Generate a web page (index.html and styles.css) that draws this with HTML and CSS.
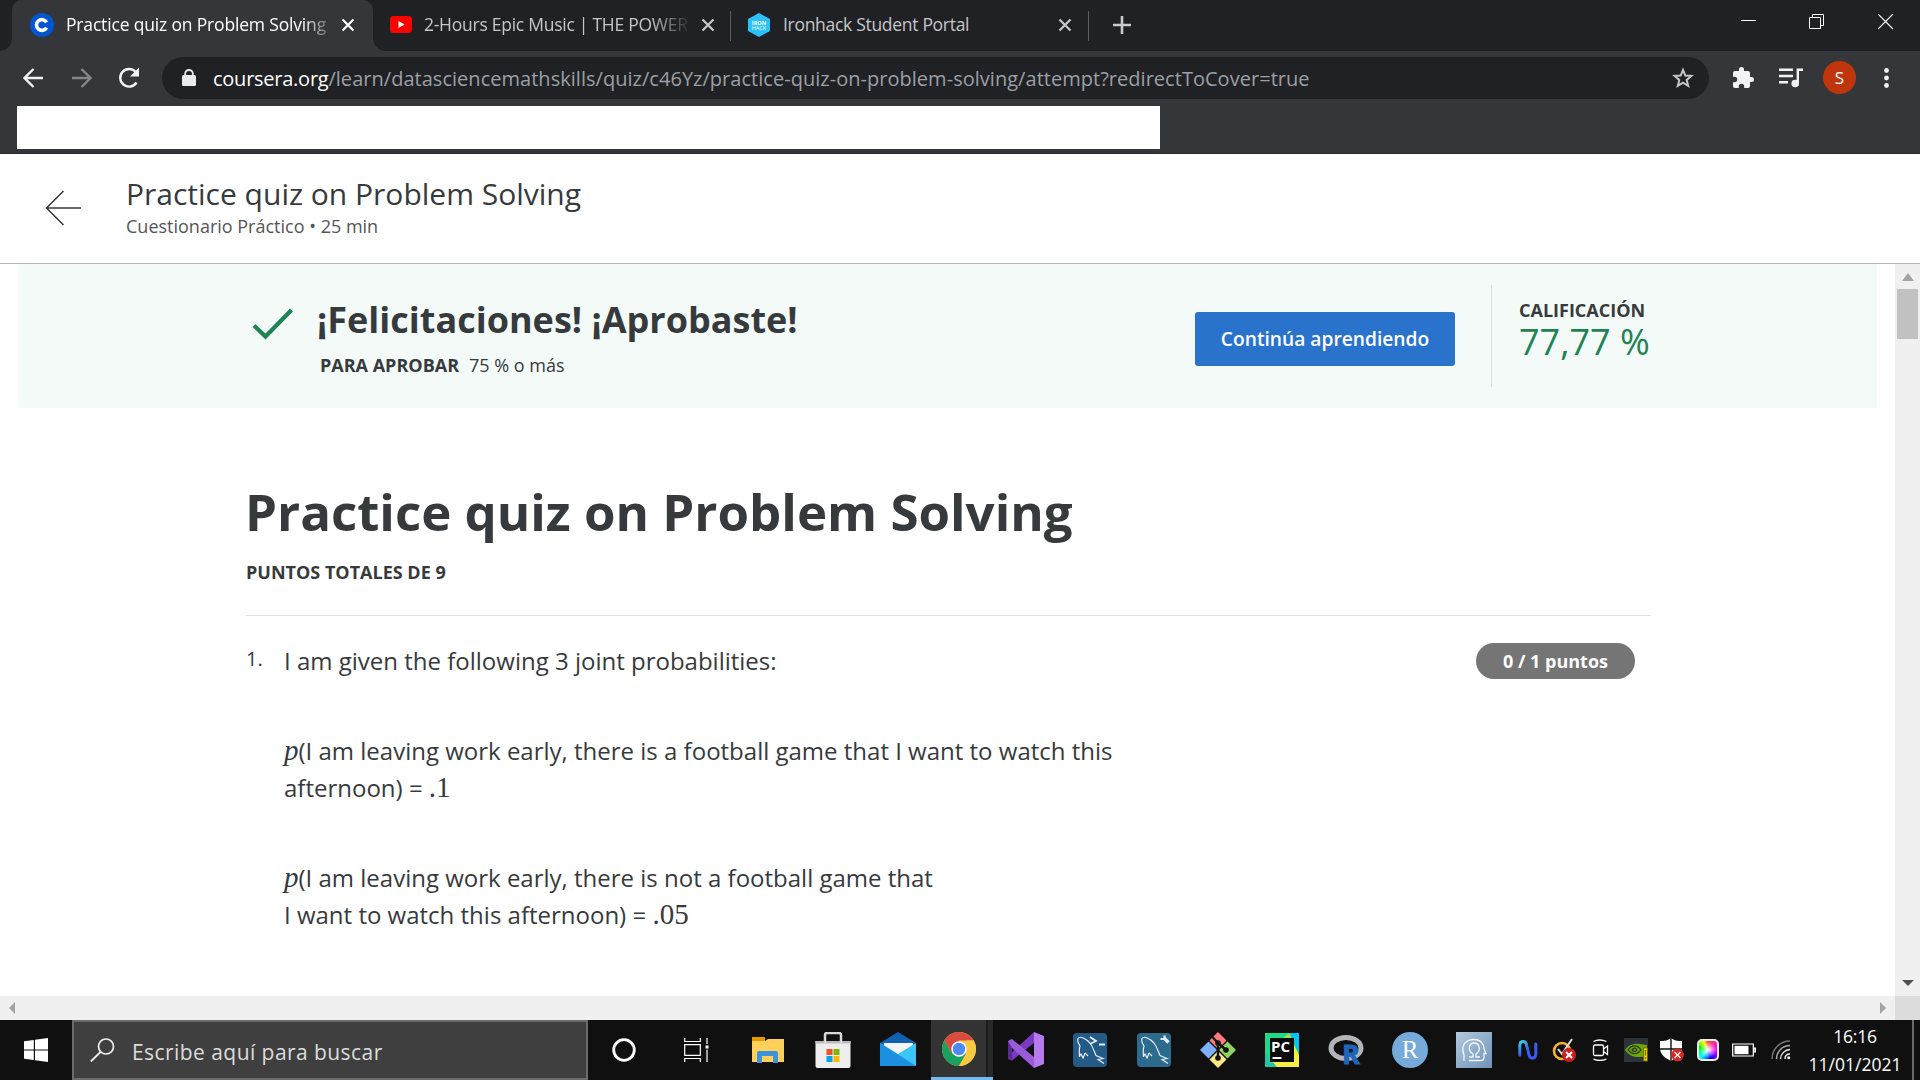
FILE: index.html
```html
<!DOCTYPE html>
<html lang="es">
<head>
<meta charset="utf-8">
<title>Practice quiz on Problem Solving</title>
<link rel="stylesheet" href="styles.css">
</head>
<body>
<div class="screen">
  <div class="tabstrip">
    <div class="tab active">
      <svg class="favicon" width="24" height="24" viewBox="0 0 24 24"><circle cx="12" cy="12" r="12" fill="#0056d2"/><path d="M16.6 14.6a5.4 5.4 0 1 1 0-5.2" fill="none" stroke="#fff" stroke-width="3.6"/></svg>
      <span class="tab-title fade-active">Practice quiz on Problem Solving</span>
      <svg class="tab-close" width="14" height="14" viewBox="0 0 14 14"><path d="M1.5 1.5l11 11m0-11l-11 11" stroke="#fff" stroke-width="2.2"/></svg>
    </div>
    <div class="tab second">
      <svg class="favicon" width="22" height="17" viewBox="0 0 22 17"><rect width="22" height="17" rx="3.5" fill="#f00"/><path d="M8.5 5v7l6-3.5z" fill="#fff"/></svg>
      <span class="tab-title fade">2-Hours Epic Music | THE POWER</span>
      <svg class="tab-close" width="14" height="14" viewBox="0 0 14 14"><path d="M1.5 1.5l11 11m0-11l-11 11" stroke="#c8cacd" stroke-width="2.2"/></svg>
    </div>
    <div class="tab third">
      <svg class="favicon" width="24" height="24" viewBox="0 0 24 24"><path d="M12 0l11 6v12l-11 6-11-6V6z" fill="#2dc1fc"/><text x="12" y="11.5" font-size="5.5" font-weight="700" text-anchor="middle" fill="#fff">IRON</text><text x="12" y="17" font-size="5.5" text-anchor="middle" fill="#fff">HACK</text></svg>
      <span class="tab-title">Ironhack Student Portal</span>
      <svg class="tab-close" width="14" height="14" viewBox="0 0 14 14"><path d="M1.5 1.5l11 11m0-11l-11 11" stroke="#c8cacd" stroke-width="2.2"/></svg>
    </div>
    <svg class="newtab" width="18" height="18" viewBox="0 0 18 18"><path d="M9 0v18M0 9h18" stroke="#c8cacd" stroke-width="2.6"/></svg>
    <div class="winbtns">
      <svg width="16" height="16" viewBox="0 0 16 16"><path d="M1 6.500h15" stroke="#fff"/></svg>
      <svg width="16" height="16" viewBox="0 0 16 16"><path d="M.5 3.5h11v11H.5zM3.500 3.500v-3h11v11h-3" fill="none" stroke="#fff"/></svg>
      <svg width="16" height="16" viewBox="0 0 16 16"><path d="M0 0l15 15M15 0L0 15" stroke="#fff" stroke-width="1.2"/></svg>
    </div>
  </div>
  <div class="toolbar">
    <svg class="nav back" width="20" height="20" viewBox="0 0 20 20"><path d="M20 10H2M10.500 1L1.500 10l9 9" fill="none" stroke="#f1f3f4" stroke-width="2.4"/></svg>
    <svg class="nav fwd" width="20" height="20" viewBox="0 0 20 20"><path d="M0 10h18M9.500 1l9 9-9 9" fill="none" stroke="#85878a" stroke-width="2.4"/></svg>
    <svg class="nav reload" width="22" height="22" viewBox="0 0 22 22"><path d="M18.500 15.500A8.800 8.800 0 1 1 17.500 4.800" fill="none" stroke="#f1f3f4" stroke-width="2.4"/><path d="M21 .5v9h-9z" fill="#f1f3f4"/></svg>
    <div class="omnibox">
      <svg width="14" height="18" viewBox="0 0 14 18"><rect y="6" width="14" height="11" rx="1.5" fill="#e8eaed"/><path d="M3.200 7V4.500a3.800 3.500 0 0 1 7.600 0V7" fill="none" stroke="#e8eaed" stroke-width="1.8"/></svg>
      <span class="url"><b>coursera.org</b>/learn/datasciencemathskills/quiz/c46Yz/practice-quiz-on-problem-solving/attempt?redirectToCover=true</span>
      <svg class="star" width="22" height="22" viewBox="0 0 22 22"><path d="M11 2.800l2.300 5.700 6.100.4-4.700 4 1.500 6L11 15.600l-5.200 3.300 1.500-6-4.700-4 6.100-.4z" fill="none" stroke="#c4c7ca" stroke-width="2"/></svg>
    </div>
    <svg class="ext" width="22" height="22" viewBox="1 1 22 22"><path d="M20.500 11H19V7a2 2 0 0 0-2-2h-4V3.500a2.500 2.500 0 0 0-5 0V5H4a2 2 0 0 0-2 2v3.800h1.500a2.700 2.700 0 0 1 0 5.400H2V20a2 2 0 0 0 2 2h3.800v-1.500a2.700 2.700 0 0 1 5.400 0V22H17a2 2 0 0 0 2-2v-4h1.500a2.500 2.500 0 0 0 0-5z" fill="#f1f3f4"/></svg>
    <svg class="media" width="24" height="20" viewBox="0 0 24 20"><path d="M0 1.800h14M0 8h14M0 14.200h9" stroke="#f1f3f4" stroke-width="2.4"/><path d="M18.800 15V1.800H24" fill="none" stroke="#f1f3f4" stroke-width="2.4"/><circle cx="16.200" cy="15.500" r="3.800" fill="#f1f3f4"/></svg>
    <div class="avatar">S</div>
    <svg class="dots" width="5" height="20" viewBox="0 0 5 20"><g fill="#f1f3f4"><circle cx="2.500" cy="2.500" r="2.400"/><circle cx="2.500" cy="10" r="2.400"/><circle cx="2.500" cy="17.500" r="2.400"/></g></svg>
  </div>
  <div class="bookmarks"><div class="blank"></div></div>

  <header class="page-head">
    <svg width="36" height="36" viewBox="0 0 36 36"><path d="M36 18H1.500M18.500 1l-17 17 17 17" fill="none" stroke="#373a3c" stroke-width="1.5"/></svg>
    <div>
      <div class="head-title">Practice quiz on Problem Solving</div>
      <div class="head-sub">Cuestionario Práctico • 25 min</div>
    </div>
  </header>

  <div class="viewport">
    <main class="content">
      <section class="banner">
        <svg class="check" width="42" height="32" viewBox="0 0 42 32"><path d="M2 17.500L13.500 28.500 39.500 2" fill="none" stroke="#1f8354" stroke-width="4.2"/></svg>
        <div class="result">
          <div class="congrats">¡Felicitaciones! ¡Aprobaste!</div>
          <div class="pass"><b>PARA APROBAR</b><span>75 % o más</span></div>
        </div>
        <div class="cta">Continúa aprendiendo</div>
        <div class="grade">
          <div class="grade-label">CALIFICACIÓN</div>
          <div class="grade-value">77,77 %</div>
        </div>
      </section>
      <section class="quiz">
        <h1>Practice quiz on Problem Solving</h1>
        <div class="points">PUNTOS TOTALES DE 9</div>
        <div class="question">
          <div class="num">1.</div>
          <div class="body">
            <p>I am given the following 3 joint probabilities:</p>
            <p><i>p</i>(I am leaving work early, there is a football game that I want to watch this<br>afternoon) = <span class="m">.1</span></p>
            <p><i>p</i>(I am leaving work early, there is not a football game that<br>I want to watch this afternoon) = <span class="m">.05</span></p>
          </div>
          <div class="pill">0 / 1 puntos</div>
        </div>
      </section>
    </main>
    <div class="vscroll">
      <svg width="12" height="8" viewBox="0 0 12 8"><path d="M0 8l6-8 6 8z" fill="#a3a3a3"/></svg>
      <div class="thumb"></div>
      <svg class="down" width="12" height="6" viewBox="0 0 12 6"><path d="M0 0l6 6 6-6z" fill="#505050"/></svg>
    </div>
  </div>
  <div class="hscroll">
    <svg width="6" height="12" viewBox="0 0 6 12"><path d="M6 0L0 6l6 6z" fill="#a3a3a3"/></svg>
    <svg class="right" width="6" height="12" viewBox="0 0 6 12"><path d="M0 0l6 6-6 6z" fill="#a3a3a3"/></svg>
    <div class="corner"></div>
  </div>

  <div class="taskbar">
    <div class="start"><svg width="24" height="24" viewBox="0 0 24 24"><path d="M0 3.300l9.800-1.400v9.500H0zM11 1.700L24 0v11.400H11zM0 12.600h9.800v9.500L0 20.700zM11 12.600h13V24l-13-1.800z" fill="#fff"/></svg></div>
    <div class="search">
      <svg width="25" height="24" viewBox="0 0 25 24"><circle cx="16" cy="8.500" r="7.500" fill="none" stroke="#eee" stroke-width="1.7"/><path d="M10.500 14L.8 23.500" stroke="#eee" stroke-width="1.8"/></svg>
      <span>Escribe aquí para buscar</span>
    </div>
    <div class="app wide"><svg width="26" height="26" viewBox="0 0 26 26"><circle cx="13" cy="13" r="10.300" fill="none" stroke="#fff" stroke-width="2.8"/></svg></div>
    <div class="app wide view"><svg width="26" height="24" viewBox="0 0 26 24"><path d="M.7 0v3.500h15.600V0M.7 6.700h15.600v10.600H.7zM.7 24v-3.500h15.600V24M23 0v6M23 11.500V24" fill="none" stroke="#fff" stroke-width="1.2"/><rect x="21.500" y="7.500" width="3" height="3" fill="#fff"/></svg></div>
    <div class="app"><svg width="36" height="36" viewBox="0 0 36 36"><path d="M2 5h13v6H2z" fill="#e09b00"/><path d="M2 9h13l3-2h16v23H2z" fill="#ffd15c"/><path d="M7 31V21q0-2 2-2h17q2 0 2 2v10h-5v-7H12v7z" fill="#3c93dc"/></svg></div>
    <div class="app store"><svg width="36" height="36" viewBox="0 0 36 36"><path d="M.5 9h35v25q0 2-2 2h-31q-2 0-2-2z" fill="#eee"/><path d="M.5 9h35v2.500H.5z" fill="#bbb"/><path d="M10 12V3q0-2 2-2h12q2 0 2 2v9" fill="none" stroke="#d8d8d8" stroke-width="2.5"/><path d="M11.500 17h6v6h-6z" fill="#f25022"/><path d="M18.500 17h6v6h-6z" fill="#7fba00"/><path d="M11.500 24h6v6h-6z" fill="#00a4ef"/><path d="M18.500 24h6v6h-6z" fill="#ffb900"/></svg></div>
    <div class="app mail"><svg width="36" height="36" viewBox="0 0 36 36"><path d="M0 11L18 0l18 11v10H0z" fill="#0f62b0"/><path d="M4 11h29v10L18 27 4 20z" fill="#f4f4f4"/><path d="M0 11l18 11L36 11v23H0z" fill="#3ac5f5"/><path d="M0 11l36 23H0z" fill="#1b8fe0"/></svg></div>
    <div class="app chrome"><svg width="34" height="34" viewBox="0 0 34 34"><circle cx="17" cy="17" r="17" fill="#fbc93d"/><path d="M2.300 8.500A17 17 0 0 1 31.700 8.500H17L9.600 21.300z" fill="#db4a3e"/><path d="M2.300 8.500A17 17 0 0 0 17 34l7.400-12.800H9.600z" fill="#1aa15f"/><path d="M17 34l7.400-12.700V8.500h7.300A17 17 0 0 1 17 34z" fill="#fbc93d"/><circle cx="17" cy="17" r="7.700" fill="#fff"/><circle cx="17" cy="17" r="6.200" fill="#4c8bf5"/></svg></div>
    <div class="app"><svg width="36" height="36" viewBox="0 0 36 36"><path d="M26 0l10 4v28l-10 4z" fill="#b57bee"/><path d="M26 0v11L4 28.500 0 27V24z" fill="#7a39c0"/><path d="M0 9l4-2v21.500L0 27z" fill="#5c2d91"/><path d="M0 9l4-2 22 18v11L4 16z" fill="#9a5bdb"/></svg></div>
    <div class="app"><svg width="36" height="36" viewBox="0 0 36 36"><rect x="1" y="1" width="34" height="34" rx="4" fill="#245a86"/><g fill="none" stroke="#e4eef6" stroke-width="1.2"><path d="M13 21l-2 5-2-4c-1 1-1.500 1-1.500 3 0-4-1-7 .5-11C6 11 5 9 6 6.500c2-3 8 0 12 4.500 3 4 4 8 6 12.500l7 3-5 1 6 4M13 21l3 3"/><path d="M18 5l6 4-6 3M27 12.500h6" stroke-width="1.800"/></g></svg></div>
    <div class="app"><svg width="36" height="36" viewBox="0 0 36 36"><rect x="1" y="1" width="34" height="34" rx="4" fill="#2c6a8e"/><g fill="none" stroke="#e4eef6" stroke-width="1.2"><path d="M13 21l-2 5-2-4c-1 1-1.500 1-1.500 3 0-4-1-7 .5-11C6 11 5 9 6 6.500c2-3 8 0 12 4.500 3 4 4 8 6 12.500l7 3-5 1 6 4M13 21l3 3"/><path d="M28 6l4.500 4.500" stroke-width="3.200"/><path d="M28.500 3.500v3.500h-4" stroke-width="2.200"/></g></svg></div>
    <div class="app"><svg width="36" height="36" viewBox="0 0 36 36"><path d="M18 0l8.500 8.500L18 17 9.500 8.500z" fill="#ff7b7b"/><path d="M8.500 9.500L17 18l-8.500 8.500L0 18z" fill="#7db0ff"/><path d="M27.500 9.500L36 18l-8.500 8.500L19 18z" fill="#8fd45f"/><path d="M18 19l8.500 8.500L18 36l-8.500-8.500z" fill="#ffe583"/><path d="M12.500 5l5.500 6v15M18 11l8 7" fill="none" stroke="#111" stroke-width="2.4"/><circle cx="18" cy="11" r="2.800" fill="#111"/><circle cx="18" cy="26" r="2.800" fill="#111"/><circle cx="26" cy="18" r="2.800" fill="#111"/></svg></div>
    <div class="app"><svg width="34" height="34" viewBox="0 0 34 34"><path d="M0 0h34v34H0z" fill="#21d789"/><path d="M25 0h9v20z" fill="#07c3f2"/><path d="M29 12l5 10v12H8l-2-5z" fill="#f4ee45"/><path d="M17 6l7-6 3 6z" fill="#9be25c"/><path d="M0 20l12 14H0z" fill="#1fc9a4"/><path d="M5 5h24v24H5z" fill="#0b0b0b"/><path d="M7.500 24h9v2h-9z" fill="#fff"/><text x="6" y="18.500" font-size="15" font-weight="700" fill="#fff">PC</text></svg></div>
    <div class="app"><svg class="spill" width="36" height="30" viewBox="0 0 36 30"><ellipse cx="18" cy="13" rx="15" ry="10.500" fill="none" stroke="#b4b5b9" stroke-width="5"/><text x="14" y="28.500" font-size="27" font-weight="700" fill="#1f65b8" stroke="#1f65b8">R</text></svg></div>
    <div class="app"><svg width="36" height="36" viewBox="0 0 36 36"><circle cx="18" cy="18" r="18" fill="#75aadb"/><text class="serif" x="18" y="26" font-size="25" text-anchor="middle" fill="#fff">R</text></svg></div>
    <div class="app"><svg width="36" height="36" viewBox="0 0 36 36"><defs><linearGradient id="head" x2="1" y2="1"><stop stop-color="#b3c9dc"/><stop offset="1" stop-color="#6f92ba"/></linearGradient></defs><path d="M0 0h36v36H0z" fill="url(#head)"/><g fill="none" stroke="#f3f7fb" stroke-width="1.3"><path d="M8 29v-6C4 12 11 7.500 18 7.500c7 0 10 5 10 9l2 5h-2v4q0 3-3 3H13"/><path d="M13 25h4v-3c-6-4-4-11 1-11s8 7 2 11v3h4"/></g></svg></div>
    <div class="tray">
      <div><svg width="20" height="20" viewBox="0 0 20 20"><defs><linearGradient id="wave" y2="1" x2=".6"><stop stop-color="#3fd0e0"/><stop offset=".6" stop-color="#3a5cf4"/></linearGradient></defs><path d="M1.800 15V6c0-6 6-6 7 0l2 8c1 6 7 5 7 0V4" fill="none" stroke="url(#wave)" stroke-width="3" stroke-linecap="round"/></svg></div>
      <div><svg width="24" height="24" viewBox="0 0 24 24"><circle cx="10" cy="13" r="8" fill="none" stroke="#f5b22d" stroke-width="2.6"/><path d="M6 11l4 5L20 1" fill="none" stroke="#ddd" stroke-width="2"/><circle cx="17" cy="17" r="7" fill="#c9201d"/><path d="M14 14l6 6m0-6l-6 6" stroke="#fff" stroke-width="2"/></svg></div>
      <div class="cam"><svg width="18" height="22" viewBox="0 0 18 22"><g fill="none" stroke="#fff" stroke-width="1.3"><rect x="1.500" y="6" width="10" height="10.500" rx="1.5"/><path d="M11.500 10l4-3v8.500l-4-3M1.500 2.500q6-3 13 0M1.500 20q6 3 13 0"/></g></svg></div>
      <div><svg width="24" height="24" viewBox="0 0 24 24"><path d="M0 0h24v24H0z" fill="#2c333d"/><path d="M1 12c6-9 16-6 22-5v11c-8 2-17 2-22-6z" fill="#6da800"/><path d="M4 12c4-6 10-5 13 0-4 5-9 5-13 0zm4 0c2-3 4-2 5 0-1 2-3 2-5 0z" fill="none" stroke="#26331c" stroke-width="1.2"/><path d="M19.500 10h4v13h-4z" fill="#f1ce00" stroke="#4d4a10" stroke-width=".6"/><path d="M20.700 19h1.500v2h-1.500zM20.700 12h1.500v5.500h-1.500z" fill="#887000"/></svg></div>
      <div><svg width="24" height="24" viewBox="0 0 24 24"><path d="M11 0c4 3 7 3 11 3v7c0 6-5 10-11 13C5 20 0 16 0 10V3c4 0 7 0 11-3z" fill="#fff"/><path d="M11 0v23M0 11h22" stroke="#111" stroke-width="1.4"/><circle cx="17.500" cy="17" r="6.300" fill="#dc2626"/><path d="M14.500 14l6 6m0-6l-6 6" stroke="#fff" stroke-width="1.3"/></svg></div>
      <div><div class="swatch"></div></div>
      <div><svg width="24" height="14" viewBox="0 0 24 14"><path d="M.7 1h20.600v12H.7zM22 5h1.500v4H22z" fill="none" stroke="#fff" stroke-width="1.2"/><path d="M2.500 2.800h14v8.400h-14z" fill="#fff"/></svg></div>
      <div class="wifi"><svg width="20" height="20" viewBox="0 0 20 20"><g fill="none" stroke="#eee" stroke-width="1.4"><path d="M1 19C1 9 9 1 19 1" stroke="#777"/><path d="M5.500 19C5.500 11.500 11.500 5.500 19 5.500" stroke="#aaa"/><path d="M9.500 19c0-5 4.500-9.500 9.500-9.500M14 19c0-3 2-5 5-5"/></g><circle cx="17.700" cy="17.700" r="1.500" fill="#fff"/></svg></div>
    </div>
    <div class="clock"><span>16:16</span><span class="date">11/01/2021</span></div>
    <div class="peek"></div>
  </div>
</div>
</body>
</html>
```
FILE: styles.css
```css
* { box-sizing: border-box; }
body { margin: 0; font-family: "Open Sans", "Noto Sans", sans-serif; color: #373a3c; }
svg { display: block; flex: none; }
.screen { width: 1920px; height: 1080px; overflow: hidden; background: #fff; display: flex; flex-direction: column; }
.screen > * { flex: none; }

.tabstrip { height: 51px; background: #202124; display: flex; padding-left: 12px; }
.tab { display: flex; align-items: center; height: 51px; color: #c4c7ca; font-size: 17.5px; padding-bottom: 2px; }
.tab-title { flex: 1; white-space: nowrap; line-height: 26px; padding-bottom: 2px; letter-spacing: -.3px; }
.active { position: relative; width: 361px; background: #35363a; border-radius: 10px 10px 0 0; color: #fff; padding: 0 18px 2px 18px; }
.active::before, .active::after { content: ""; position: absolute; bottom: 0; width: 12px; height: 12px; }
.active::before { left: -12px; background: radial-gradient(circle at 0 0, transparent 11.5px, #35363a 12px); }
.active::after { right: -12px; background: radial-gradient(circle at 100% 0, transparent 11.5px, #35363a 12px); }
.favicon { margin-right: 12px; }
.fade-active { margin-right: 15px; letter-spacing: -.17px; mask-image: linear-gradient(90deg, #000 91%, rgba(0,0,0,.3)); }
.second { width: 357px; padding-left: 17px; padding-right: 17px; }
.second .favicon { margin-right: 12px; }
.second .tab-title { margin-right: 13px; letter-spacing: -.26px; }
.fade { mask-image: linear-gradient(90deg, #000 86%, rgba(0,0,0,.1)); }
.third { width: 359px; padding-left: 17px; padding-right: 17px; position: relative; }
.third::before, .third::after { content: ""; position: absolute; top: 11px; height: 30px; width: 1px; background: #5b5d60; }
.third::before { left: 0; }
.third::after { right: 0; }
.newtab { margin: 16px 0 0 24px; }
.winbtns { margin-left: auto; display: flex; gap: 53px; padding: 14px 26px 0 0; }

.toolbar { height: 55px; background: #35363a; display: flex; align-items: center; padding: 0 29px 2px 23px; }
.fwd { margin-left: 29px; }
.reload { margin-left: 26px; }
.omnibox { width: 1547px; height: 42px; margin: 1px 0 0 22px; border-radius: 21px; background: #202124; display: flex; align-items: center; padding: 0 15px 0 20px; }
.url { margin: 1px 0 0 17px; font-size: 20px; color: #9aa0a6; white-space: nowrap; flex: 1; letter-spacing: .03px; }
.url b { font-weight: 400; color: #fff; letter-spacing: -.25px; }
.ext { margin-left: 23px; }
.media { margin-left: 25px; }
.avatar { margin-left: 20px; width: 33px; height: 33px; border-radius: 50%; background: #bf360c; color: #fff; font-size: 17px; line-height: 33px; text-align: center; }
.dots { margin-left: 28px; }
.bookmarks { height: 48px; background: #35363a; padding-left: 17px; border-bottom: 1px solid #28292b; }
.blank { width: 1143px; height: 43px; background: #fff; }

.page-head { height: 110px; border-bottom: 1px solid #b5b8b8; display: flex; padding-left: 45px; }
.page-head svg { margin: 36px 45px 0 0; }
.head-title { font-size: 30px; line-height: 40px; margin-top: 20px; white-space: nowrap; }
.head-sub { font-size: 18px; line-height: 24px; color: #555; }

.viewport { height: 732px; display: flex; }
.content { width: 1895px; padding-left: 18px; }
.banner { width: 1859px; height: 144px; background: #f3faf8; display: flex; padding-left: 234px; }
.check { margin-top: 44px; }
.result { width: 902px; flex: none; padding: 29px 0 0 23px; }
.congrats { font-size: 36px; font-weight: 700; line-height: 54px; white-space: nowrap; }
.pass { font-size: 18px; line-height: 26px; margin: 5px 0 0 3px; display: flex; gap: 10px; }
.pass b, .grade-label, .points { font-weight: 700; }
.cta { width: 260px; height: 54px; margin: 48px 0 0 -1px; border-radius: 3px; background: #2a73cc; color: #fff; font-size: 19.2px; font-weight: 600; line-height: 53px; text-align: center; white-space: nowrap; }
.grade { margin: 21px 0 0 36px; height: 102px; border-left: 1px solid #dbe1df; padding-left: 27px; }
.grade-label { font-size: 18px; line-height: 26px; margin-top: 12px; }
.grade-value { font-size: 36px; line-height: 38px; color: #1f8354; white-space: nowrap; }
.quiz { margin-left: 228px; width: 1405px; }
h1 { margin: 71px 0 0 -1px; font-size: 51px; line-height: 64px; font-weight: 700; }
.points { font-size: 18px; line-height: 26px; margin-top: 16px; }
.question { margin-top: 30px; border-top: 1px solid #dfe1e1; display: flex; align-items: flex-start; padding-top: 26px; }
.num { width: 38px; font-size: 20px; line-height: 34px; }
.body { width: 1192px; font-size: 24px; line-height: 37px; }
.body p { margin: 0 0 53px; white-space: nowrap; }
.body i, .m { font-family: "Liberation Serif", serif; font-size: 29px; line-height: 1; }
.pill { width: 159px; height: 36px; margin-top: 1px; border-radius: 18px; background: #757575; color: #fff; font-size: 18px; font-weight: 700; line-height: 36px; text-align: center; white-space: nowrap; }

.vscroll { width: 25px; background: #f0f0f0; display: flex; flex-direction: column; align-items: center; padding: 9px 0 10px; }
.thumb { width: 21px; height: 50px; margin-top: 8px; background: #c1c1c1; }
.down { margin-top: auto; }
.hscroll { height: 24px; background: #f0f0f0; display: flex; align-items: center; padding-left: 9px; }
.right { margin-left: auto; margin-right: 9px; }
.corner { width: 25px; height: 24px; background: #dcdcdc; }

.taskbar { height: 60px; background: #101010; display: flex; }
.start { width: 72px; padding: 18px 0 0 24px; }
.search { width: 516px; border: 2px solid #6a6a6a; background: #3f3f3f; display: flex; align-items: center; padding-left: 16px; font-size: 21px; color: #dcdcdc; letter-spacing: .44px; }
.search svg { margin-top: -1px; }
.search span { margin: 4px 0 0 17px; white-space: nowrap; }
.app { width: 64px; display: flex; align-items: center; justify-content: center; }
.wide { width: 72px; }
.view { margin-right: 4px; padding-left: 1px; }
.store { padding-left: 1px; }
.mail { padding-left: 4px; }
.chrome { width: 62px; margin: 0 1px 0 3px; padding-right: 6px; background: linear-gradient(90deg, #333 55px, #1c1c1c 55px, #1c1c1c 57px, #282828 57px); border-bottom: 3px solid #76b9ed; }
.spill { overflow: visible; }
.serif { font-family: "Liberation Serif", serif; }
.tray { display: flex; margin-left: 4px; }
.tray > div { width: 36px; display: flex; align-items: center; justify-content: center; }
.tray > .cam, .tray > .wifi { padding-left: 2px; }
.swatch { width: 22px; height: 22px; border: 2px solid #eee; border-radius: 5px; background: radial-gradient(circle, #fff, transparent 65%), conic-gradient(#f44, #f0f 25%, #00f 45%, #0ff 62%, #0f0 80%, #ff0 92%, #f44); }
.clock { width: 114px; color: #fff; font-size: 17.5px; letter-spacing: -.25px; display: flex; flex-direction: column; align-items: center; line-height: 28px; padding-top: 2px; }
.date { letter-spacing: 0; }
.peek { width: 2px; background: #6a6a6a; }
```
